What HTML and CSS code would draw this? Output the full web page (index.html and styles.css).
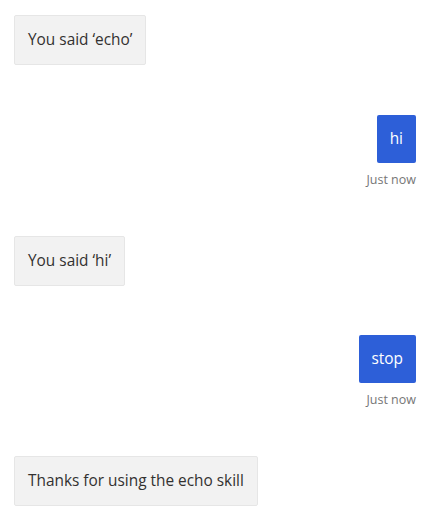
FILE: index.html
```html
<!DOCTYPE html>
<html>
<head>
<meta charset="utf-8">
<link rel="stylesheet" href="styles.css">
</head>
<body>
<div class="transcript">
  <div class="row bot first">
    <div class="bubble bot-bubble">You said ‘echo’</div>
  </div>
  <div class="row user">
    <div class="bubble user-bubble">hi</div>
    <div class="stamp">Just now</div>
  </div>
  <div class="row bot">
    <div class="bubble bot-bubble">You said ‘hi’</div>
  </div>
  <div class="row user second">
    <div class="bubble user-bubble">stop</div>
    <div class="stamp">Just now</div>
  </div>
  <div class="row bot">
    <div class="bubble bot-bubble">Thanks for using the echo skill</div>
  </div>
</div>
</body>
</html>
```
FILE: styles.css
```css
html, body {
  margin: 0;
  padding: 0;
  background: #ffffff;
}
body {
  font-family: "Open Sans", "Noto Sans", "Liberation Sans", sans-serif;
  font-size: 15.4px;
}
.transcript {
  display: flex;
  flex-direction: column;
  padding: 15px 12px 0 14px;
}
.row {
  display: flex;
  flex-direction: column;
}
.row.bot {
  align-items: flex-start;
  margin-top: 48px;
}
.row.bot.first {
  margin-top: 0;
}
.row.user {
  align-items: flex-end;
  margin-top: 50px;
}
.row.user.second {
  margin-top: 49px;
}
.bubble {
  line-height: 20px;
  border-radius: 2px;
}
.bot-bubble {
  background: #f2f2f2;
  border: 1px solid #e6e6e6;
  color: #323130;
  padding: 14px 13px;
}
.user-bubble {
  background: #2d5fd8;
  color: #ffffff;
  padding: 14px 13px;
}
.stamp {
  margin-top: 9px;
  font-size: 12.5px;
  line-height: 16px;
  color: #767676;
}
```
